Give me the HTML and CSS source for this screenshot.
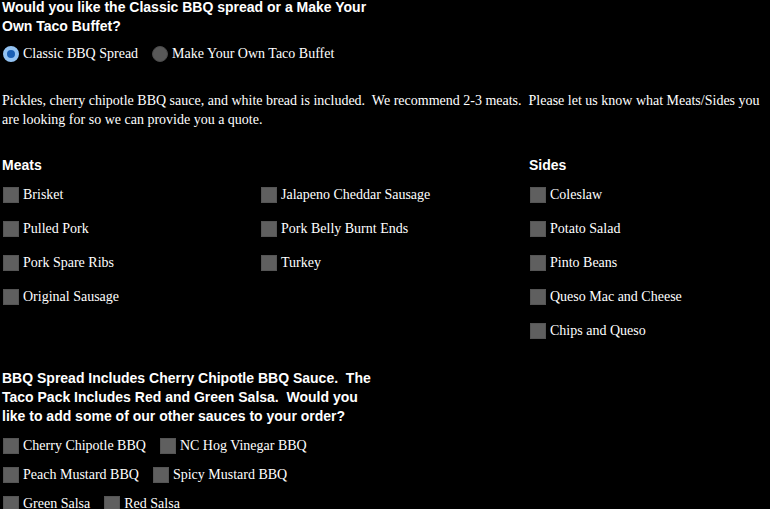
FILE: index.html
```html
<!DOCTYPE html>
<html>
<head>
<meta charset="utf-8">
<link rel="stylesheet" href="styles.css">
</head>
<body>
<div class="page">
  <h2 class="question">Would you like the Classic BBQ spread or a Make Your Own Taco Buffet?</h2>
  <div class="radios">
    <label class="opt"><input type="radio" name="style" class="radio" checked><span>Classic BBQ Spread</span></label>
    <label class="opt"><input type="radio" name="style" class="radio"><span>Make Your Own Taco Buffet</span></label>
  </div>
  <p class="note">Pickles, cherry chipotle BBQ sauce, and white bread is included.&nbsp; We recommend 2-3 meats.&nbsp; Please let us know what Meats/Sides you are looking for so we can provide you a quote.</p>
  <div class="menu">
    <section class="group meats">
      <h3 class="group-title">Meats</h3>
      <div class="meat-grid">
        <label class="item"><input type="checkbox" class="box"><span>Brisket</span></label>
        <label class="item"><input type="checkbox" class="box"><span>Pulled Pork</span></label>
        <label class="item"><input type="checkbox" class="box"><span>Pork Spare Ribs</span></label>
        <label class="item"><input type="checkbox" class="box"><span>Original Sausage</span></label>
        <label class="item"><input type="checkbox" class="box"><span>Jalapeno Cheddar Sausage</span></label>
        <label class="item"><input type="checkbox" class="box"><span>Pork Belly Burnt Ends</span></label>
        <label class="item"><input type="checkbox" class="box"><span>Turkey</span></label>
      </div>
    </section>
    <section class="group sides">
      <h3 class="group-title">Sides</h3>
      <div class="side-list">
        <label class="item"><input type="checkbox" class="box"><span>Coleslaw</span></label>
        <label class="item"><input type="checkbox" class="box"><span>Potato Salad</span></label>
        <label class="item"><input type="checkbox" class="box"><span>Pinto Beans</span></label>
        <label class="item"><input type="checkbox" class="box"><span>Queso Mac and Cheese</span></label>
        <label class="item"><input type="checkbox" class="box"><span>Chips and Queso</span></label>
      </div>
    </section>
  </div>
  <h2 class="question sauces-q">BBQ Spread Includes Cherry Chipotle BBQ Sauce.&nbsp; The Taco Pack Includes Red and Green Salsa.&nbsp; Would you like to add some of our other sauces to your order?</h2>
  <div class="sauces">
    <div class="sauce-row">
      <label class="item"><input type="checkbox" class="box"><span>Cherry Chipotle BBQ</span></label>
      <label class="item"><input type="checkbox" class="box"><span>NC Hog Vinegar BBQ</span></label>
    </div>
    <div class="sauce-row">
      <label class="item"><input type="checkbox" class="box"><span>Peach Mustard BBQ</span></label>
      <label class="item"><input type="checkbox" class="box"><span>Spicy Mustard BBQ</span></label>
    </div>
    <div class="sauce-row">
      <label class="item"><input type="checkbox" class="box"><span>Green Salsa</span></label>
      <label class="item"><input type="checkbox" class="box"><span>Red Salsa</span></label>
    </div>
  </div>
</div>
</body>
</html>
```
FILE: styles.css
```css
html, body {
  margin: 0;
  background: #000;
  color: #fff;
}
.page {
  padding: 0 2px;
  font-family: "Liberation Serif", "Times New Roman", serif;
  font-size: 14px;
}
.question {
  font-family: "Liberation Sans", Arial, sans-serif;
  font-weight: bold;
  font-size: 14px;
  line-height: 19px;
  margin: -2px 0 0;
  max-width: 375px;
}
.radios {
  display: flex;
  gap: 13px;
  margin-top: 10px;
}
.opt, .item {
  display: flex;
  align-items: center;
  gap: 4px;
  height: 16px;
}
.radio {
  appearance: none;
  margin: 0 0 0 1px;
  width: 16px;
  height: 16px;
  border-radius: 50%;
  background: #585858;
  border: 1px solid #4a4a4a;
  box-sizing: border-box;
}
.radio:checked {
  background: #1a5fb4;
  border: 4px solid #93c3f3;
}
.note {
  margin: 29px 0 0;
  line-height: 19px;
}
.menu {
  display: flex;
  margin-top: 27px;
}
.group-title {
  font-family: "Liberation Sans", Arial, sans-serif;
  font-weight: bold;
  font-size: 14px;
  line-height: 19px;
  margin: 0 0 12px;
}
.meats {
  width: 527px;
}
.meat-grid {
  display: grid;
  grid-template-columns: 258px 269px;
  grid-template-rows: repeat(4, 16px);
  grid-auto-flow: column;
  row-gap: 18px;
}
.side-list {
  display: grid;
  grid-auto-rows: 16px;
  row-gap: 18px;
}
.box {
  appearance: none;
  margin: 0 0 0 1px;
  width: 16px;
  height: 16px;
  background: #5f5f5f;
  border: 1px solid #555;
  box-sizing: border-box;
}
.sauces-q {
  margin-top: 30px;
}
.sauces {
  display: flex;
  flex-direction: column;
  gap: 13px;
  margin-top: 12px;
}
.sauce-row {
  display: flex;
  gap: 13px;
}
```
